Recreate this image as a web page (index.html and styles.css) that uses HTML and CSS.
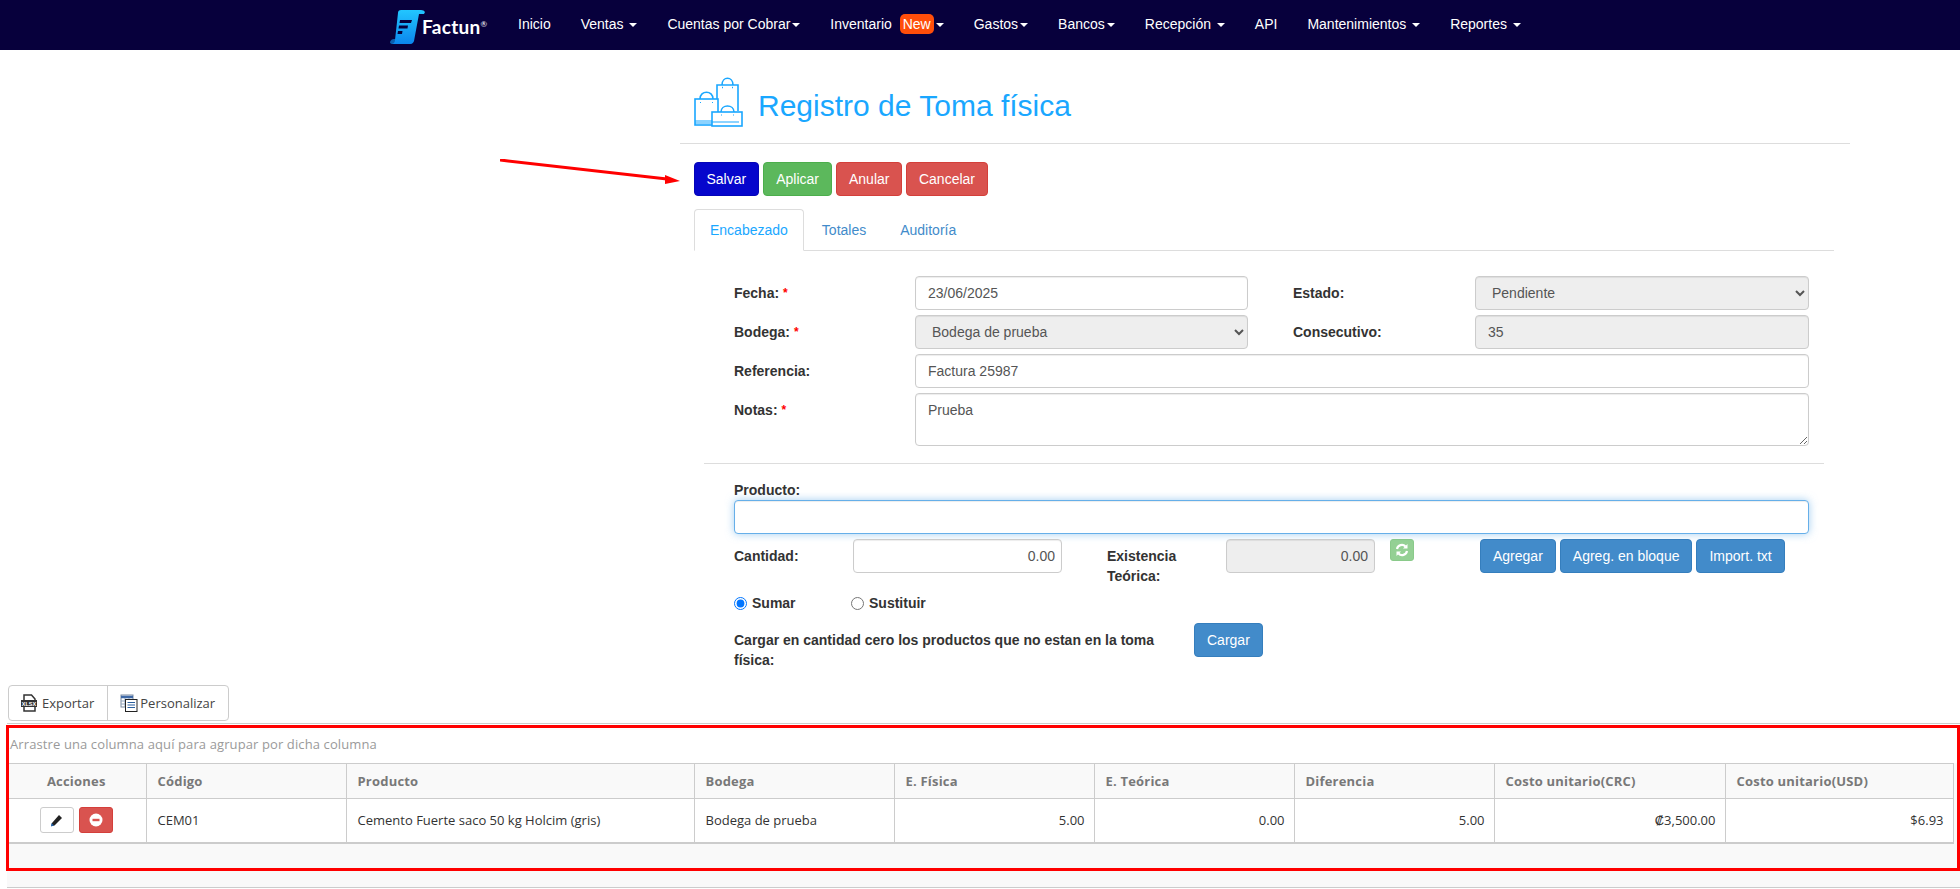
FILE: index.html
```html
<!DOCTYPE html>
<html lang="es">
<head>
    <meta charset="UTF-8">
    <meta name="viewport" content="width=device-width, initial-scale=1.0">
    <title>Registro de Toma física</title>
    <link rel="stylesheet" href="styles.css">
</head>
<body>
    <nav class="navbar">
        <a class="brand" href="#">
            <svg class="brand-icon" width="36" height="36" viewBox="0 0 36 36">
                <defs>
                    <linearGradient id="scroll" x1="0" y1="0" x2="0" y2="1">
                        <stop offset="0" stop-color="#22c6ff"/>
                        <stop offset="1" stop-color="#0b86ee"/>
                    </linearGradient>
                </defs>
                <path d="M0 33q1-3 4-3h20l-1 3q-1 2-3 2H3q-3 0-3-2z" fill="#0a5fb0"/>
                <path d="M8 4q0-3 3-3h20q3 0 4 2l-1 2h-5l-5 27q-1 3-4 3H2q3-1 3-4z" fill="url(#scroll)"/>
                <path d="M10 11h12l-1 3H9.500zM9 16.500h9l-.5 3H8.500zM8 22h4.500l-.5 3H7.500z" fill="#07003c"/>
            </svg>
            <span class="brand-text">Factun<sup>®</sup></span>
        </a>
        <ul class="nav-list">
            <li><a href="#">Inicio</a></li>
            <li><a href="#">Ventas <b class="caret"></b></a></li>
            <li><a href="#">Cuentas por Cobrar<b class="caret"></b></a></li>
            <li><a href="#">Inventario <span class="badge-new">New</span><b class="caret"></b></a></li>
            <li><a href="#">Gastos<b class="caret"></b></a></li>
            <li><a href="#">Bancos<b class="caret"></b></a></li>
            <li><a href="#">Recepción <b class="caret"></b></a></li>
            <li><a href="#">API</a></li>
            <li><a href="#">Mantenimientos <b class="caret"></b></a></li>
            <li><a href="#">Reportes <b class="caret"></b></a></li>
        </ul>
    </nav>

    <div class="page">
        <header class="page-header">
            <svg class="page-icon" width="50" height="50" viewBox="9 7 50 50" fill="none" stroke="#1aa7ff" stroke-width="1.600">
                <path d="M32 29V15h21v26"/>
                <path d="M37 15c0-9 11-9 11 0"/>
                <path d="M37 17.500h1M47 17.500h1" stroke-width="1.500"/>
                <rect x="10" y="29" width="23" height="26"/>
                <path d="M15 29c0-9 13-9 13 0"/>
                <path d="M15 32.500h1M27 32.500h1M10 51h17M10 53h17" stroke-width="1.200"/>
                <rect x="27" y="42" width="30" height="14" fill="#fff"/>
                <path d="M36 42c0-8 13-8 13 0"/>
                <path d="M36 45h1M48 45h1M27 52h27" stroke-width="1.200"/>
            </svg>
            <h1>Registro de Toma física</h1>
        </header>

        <div class="actions">
            <button class="btn btn-tight btn-save">Salvar</button>
            <button class="btn btn-wide btn-success">Aplicar</button>
            <button class="btn btn-tight btn-danger">Anular</button>
            <button class="btn btn-danger">Cancelar</button>
        </div>

        <ul class="tabs">
            <li class="active"><a href="#">Encabezado</a></li>
            <li><a href="#">Totales</a></li>
            <li><a href="#">Auditoría</a></li>
        </ul>

        <form class="form-head">
            <label>Fecha: <span class="req">*</span></label>
            <input class="field" type="text" value="23/06/2025">
            <label class="label-right">Estado:</label>
            <select class="field" disabled><option>Pendiente</option></select>

            <label>Bodega: <span class="req">*</span></label>
            <select class="field" disabled><option>Bodega de prueba</option></select>
            <label class="label-right">Consecutivo:</label>
            <input class="field" type="text" value="35" disabled>

            <label>Referencia:</label>
            <input class="field span-3" type="text" value="Factura 25987">

            <label>Notas: <span class="req">*</span></label>
            <textarea class="field span-3 notes">Prueba</textarea>
        </form>

        <hr class="divider">

        <form class="form-lines">
            <label class="label-top">Producto:</label>
            <input class="field field-focus" type="text">

            <div class="qty-row">
                <label class="qty-label">Cantidad:</label>
                <input class="field num qty-input" type="text" value="0.00">
                <label class="qty-label exist-label">Existencia Teórica:</label>
                <input class="field num exist-input" type="text" value="0.00" disabled>
                <button class="btn-refresh" type="button" aria-label="Actualizar">
                    <svg width="14" height="14" viewBox="0 0 14 14" fill="none" stroke="#fff" stroke-width="2.200">
                        <path d="M2 6a5 5 0 0 1 8.500-2.500"/>
                        <path d="M12 8a5 5 0 0 1-8.500 2.500"/>
                        <path d="M12.500 1v4.500H8z" fill="#fff" stroke="none"/>
                        <path d="M1.500 13V8.500H6z" fill="#fff" stroke="none"/>
                    </svg>
                </button>
                <div class="add-buttons">
                    <button class="btn btn-primary" type="button">Agregar</button>
                    <button class="btn btn-primary" type="button">Agreg. en bloque</button>
                    <button class="btn btn-primary" type="button">Import. txt</button>
                </div>
            </div>

            <div class="radio-row">
                <label class="radio radio-sum"><input type="radio" name="modo" checked> Sumar</label>
                <label class="radio"><input type="radio" name="modo"> Sustituir</label>
            </div>

            <div class="load-row">
                <label class="load-label">Cargar en cantidad cero los productos que no estan en la toma física:</label>
                <button class="btn btn-primary" type="button">Cargar</button>
            </div>
        </form>
    </div>

    <div class="grid-toolbar">
        <a href="#">
            <svg width="16" height="18" viewBox="0 0 16 18">
                <path d="M3 1h7.500l3.500 4v12H3z" fill="#fff" stroke="#333" stroke-width="1.500"/>
                <rect x="0" y="6" width="16" height="7" fill="#333"/>
                <text x="8" y="11.600" class="xlsx">XLSX</text>
            </svg>
            Exportar
        </a>
        <a href="#">
            <svg width="18" height="18" viewBox="0 0 18 18">
                <rect x="1" y="1" width="12" height="12" fill="#fff" stroke="#7a8aa0"/>
                <path d="M1 3h12" stroke="#3f6aa8" stroke-width="2.500"/>
                <path d="M1 7h12M1 10h12M5 4v9M9 4v9" stroke="#8fa3bd"/>
                <rect x="5.500" y="5.500" width="11.500" height="12" fill="#fff" stroke="#222"/>
                <path d="M7.500 8.500h7.500M7.500 11h7.500M7.500 13.500h7.500" stroke="#2a5f9e" stroke-width="1.200"/>
            </svg>
            Personalizar
        </a>
    </div>

    <section class="grid">
        <div class="group-panel">Arrastre una columna aquí para agrupar por dicha columna</div>
        <table class="grid-table">
            <colgroup>
                <col class="c-actions"><col class="c-code"><col class="c-product"><col class="c-std"><col class="c-std">
                <col class="c-std"><col class="c-std"><col class="c-crc"><col class="c-usd">
            </colgroup>
            <thead>
                <tr>
                    <th class="center">Acciones</th>
                    <th>Código</th>
                    <th>Producto</th>
                    <th>Bodega</th>
                    <th>E. Física</th>
                    <th>E. Teórica</th>
                    <th>Diferencia</th>
                    <th>Costo unitario(CRC)</th>
                    <th>Costo unitario(USD)</th>
                </tr>
            </thead>
            <tbody>
                <tr>
                    <td class="center">
                        <button class="row-btn row-edit" aria-label="Editar">
                            <svg width="13" height="13" viewBox="0 0 13 13">
                                <path d="M9 1l3 3-7.500 7.500-3 .5.5-3z" fill="#222"/>
                                <path d="M1.500 9l2.500 2.500L1 12.500z" fill="#1d5fa8"/>
                            </svg>
                        </button>
                        <button class="row-btn row-delete" aria-label="Eliminar">
                            <svg width="14" height="14" viewBox="0 0 14 14">
                                <circle cx="7" cy="7" r="6.500" fill="#fff"/>
                                <rect x="3.500" y="5.800" width="7" height="2.400" fill="#d9534f"/>
                            </svg>
                        </button>
                    </td>
                    <td>CEM01</td>
                    <td>Cemento Fuerte saco 50 kg Holcim (gris)</td>
                    <td>Bodega de prueba</td>
                    <td class="num">5.00</td>
                    <td class="num">0.00</td>
                    <td class="num">5.00</td>
                    <td class="num">₡3,500.00</td>
                    <td class="num">$6.93</td>
                </tr>
            </tbody>
        </table>
        <div class="grid-footer"></div>
    </section>

    <!-- anotaciones rojas de la captura -->
    <svg class="mark-arrow" width="190" height="30" viewBox="0 0 190 30">
        <path d="M0 1L167 20" stroke="#ff0000" stroke-width="3"/>
        <path d="M165 16L180 22L165 25z" fill="#ff0000"/>
    </svg>
    <div class="mark-box"></div>
</body>
</html>
```

FILE: styles.css
```css
* {
    box-sizing: border-box;
}
body {
    margin: 0;
    background: #fff;
    color: #333;
    font-family: "Liberation Sans", Arial, sans-serif;
    font-size: 14px;
    line-height: 20px;
    position: relative;
    height: 889px;
    overflow: hidden;
}
a {
    text-decoration: none;
}

/* barra superior */
.navbar {
    display: flex;
    height: 50px;
    padding-left: 390px;
    background: #07003c;
}
.brand {
    display: flex;
    align-items: center;
    width: 113px;
    height: 50px;
    flex: none;
}
.brand-icon {
    flex: none;
    margin-top: 3px;
    margin-right: -4px;
}
.brand-text {
    color: #fff;
    font-family: Lato, sans-serif;
    font-weight: 700;
    font-size: 19px;
    letter-spacing: .3px;
    margin-top: 4px;
}
.brand-text sup {
    font-size: 8px;
    font-weight: 400;
    line-height: 0;
    vertical-align: 7px;
}
.nav-list {
    display: flex;
    margin: 0;
    padding: 0;
    list-style: none;
}
.nav-list a {
    display: block;
    padding: 14px 15px 16px;
    color: #fff;
    white-space: nowrap;
}
.caret {
    display: inline-block;
    width: 0;
    height: 0;
    margin-left: 2px;
    vertical-align: middle;
    border-top: 4px solid #fff;
    border-left: 4px solid transparent;
    border-right: 4px solid transparent;
}
.badge-new {
    display: inline-block;
    margin-left: 4px;
    padding: 0 3px;
    height: 20px;
    background: #ff4e0a;
    border-radius: 5px;
}

/* contenido */
.page {
    width: 1170px;
    margin-left: 680px;
}
.page-header {
    display: flex;
    align-items: center;
    height: 94px;
    padding-left: 14px;
    padding-top: 11px;
    border-bottom: 1px solid #ddd;
}
.page-header h1 {
    margin: 6px 0 0 14px;
    color: #1aa7ff;
    font-size: 30px;
    font-weight: 400;
    line-height: 33px;
}
.actions {
    display: flex;
    gap: 4px;
    padding: 18px 0 0 14px;
}
.btn {
    height: 34px;
    padding: 6px 12px;
    border: 1px solid transparent;
    border-radius: 4px;
    color: #fff;
    font-family: inherit;
    font-size: 14px;
    line-height: 20px;
    white-space: nowrap;
}
.btn-tight {
    padding: 6px 11.5px;
}
.btn-wide {
    padding: 6px 12.5px;
}
.btn-save {
    background: #0606cc;
    border-color: #0505b8;
}
.btn-success {
    background: #5cb85c;
    border-color: #4cae4c;
}
.btn-danger {
    background: #d9534f;
    border-color: #d43f3a;
}
.btn-primary {
    background: #428bca;
    border-color: #357ebd;
}
.tabs {
    display: flex;
    width: 1140px;
    height: 42px;
    margin: 13px 0 0 14px;
    padding: 0;
    list-style: none;
    border-bottom: 1px solid #ddd;
}
.tabs li {
    margin-right: 2px;
    height: 42px;
}
.tabs a {
    display: block;
    height: 42px;
    padding: 10px 15px;
    border: 1px solid transparent;
    border-radius: 4px 4px 0 0;
    color: #428bca;
}
.tabs .active a {
    color: #1aa7ff;
    background: #fff;
    border-color: #ddd #ddd #fff;
}
.form-head {
    display: grid;
    grid-template-columns: 181px 333px 45px 182px 334px;
    grid-template-rows: 34px 34px 34px 53px;
    row-gap: 5px;
    margin: 25px 0 0 54px;
    width: 1075px;
}
.form-head label,
.label-top,
.qty-label,
.radio,
.load-label {
    font-weight: 700;
}
.form-head label {
    padding-top: 7px;
}
.label-right {
    grid-column: 4;
}
.req {
    color: #f00;
    font-size: 12px;
    vertical-align: 1px;
}
.field {
    display: block;
    width: 100%;
    height: 34px;
    padding: 6px 12px;
    border: 1px solid #ccc;
    border-radius: 4px;
    background: #fff;
    color: #555;
    font-family: inherit;
    font-size: 14px;
    line-height: 20px;
    box-shadow: inset 0 1px 1px rgba(0, 0, 0, .075);
}
.field:disabled {
    background: #eee;
    opacity: 1;
}
.field.num {
    padding-right: 6px;
}
.span-3 {
    grid-column: 2 / span 4;
}
.notes {
    height: 53px;
    resize: vertical;
}
.divider {
    width: 1120px;
    margin: 17px 0 0 24px;
    border: 0;
    border-top: 1px solid #ddd;
}
.form-lines {
    width: 1075px;
    margin: 16px 0 0 54px;
}
.label-top {
    display: block;
    height: 20px;
}
.field-focus {
    border-color: #66afe9;
    box-shadow: inset 0 1px 1px rgba(0, 0, 0, .075), 0 0 8px rgba(102, 175, 233, .6);
}
.qty-row {
    display: flex;
    align-items: flex-start;
    height: 54px;
    margin-top: 5px;
}
.qty-label {
    flex: none;
    width: 119px;
    padding-top: 7px;
}
.exist-label {
    margin-left: 45px;
}
.num {
    text-align: right;
}
.qty-input {
    width: 209px;
}
.exist-input {
    width: 149px;
}
.btn-refresh {
    width: 24px;
    height: 22px;
    margin-left: 15px;
    padding: 0;
    border: 1px solid #4cae4c;
    border-radius: 3px;
    background: #5cb85c;
    opacity: .65;
    display: flex;
    align-items: center;
    justify-content: center;
}
.add-buttons {
    display: flex;
    gap: 4px;
    margin-left: 66px;
}
.radio-row {
    display: flex;
    height: 20px;
}
.radio {
    display: flex;
    align-items: center;
    gap: 5px;
}
.radio input {
    width: 13px;
    height: 13px;
    margin: 0;
}
.radio-sum {
    width: 117px;
}
.load-row {
    display: flex;
    align-items: flex-start;
    margin-top: 10px;
}
.load-label {
    width: 460px;
    padding-top: 7px;
}

/* grilla */
.grid-toolbar {
    position: absolute;
    top: 685px;
    left: 8px;
    display: flex;
    height: 36px;
    border: 1px solid #ccc;
    border-radius: 4px;
    font-family: "Open Sans", sans-serif;
    font-size: 13px;
}
.grid-toolbar a {
    display: flex;
    align-items: center;
    gap: 5px;
    padding: 0 13px 0 12px;
    color: #444;
}
.grid-toolbar a + a {
    gap: 2px;
    border-left: 1px solid #ccc;
    padding: 0 13px 0 12px;
}
.xlsx {
    fill: #fff;
    font-family: "Liberation Sans", sans-serif;
    font-size: 5.500px;
    font-weight: 700;
    text-anchor: middle;
}
.grid {
    position: absolute;
    top: 723px;
    left: 7px;
    right: 0;
    height: 165px;
    border-top: 1px solid #ccc;
    border-bottom: 1px solid #ccc;
    font-family: "Open Sans", sans-serif;
    font-size: 13px;
    background: #f9f9f9;
}
.group-panel {
    height: 39px;
    padding: 10px 3px 0;
    background: #fff;
    color: #9a9a9a;
    letter-spacing: .11px;
}
.grid-table {
    width: 1946px;
    table-layout: fixed;
    border-collapse: collapse;
    background: #fff;
}
.c-actions { width: 139px; }
.c-code { width: 200px; }
.c-product { width: 348px; }
.c-std { width: 200px; }
.c-crc { width: 231px; }
.c-usd { width: 228px; }
.grid-table th,
.grid-table td {
    padding: 0 9px 0 11px;
    border: 1px solid #ccc;
    text-align: left;
    color: #333;
    font-weight: 400;
}
.grid-table th {
    height: 35px;
    background: #f9f9f9;
    color: #787878;
    font-weight: 700;
    letter-spacing: .2px;
}
.grid-table td {
    height: 44px;
    border-bottom-width: 2px;
}
.grid-table .center {
    padding: 0 10px;
    text-align: center;
    border-left: 0;
}
.grid-table .num {
    text-align: right;
}
.row-btn {
    display: inline-flex;
    align-items: center;
    justify-content: center;
    width: 34px;
    height: 26px;
    padding: 0;
    border-radius: 3px;
    vertical-align: middle;
    border: 1px solid #ccc;
    background: #fff;
}
.row-delete {
    margin-left: 2px;
    background: #d9534f;
    border-color: #d43f3a;
}

/* anotaciones sobre la captura */
.mark-arrow {
    position: absolute;
    left: 500px;
    top: 159px;
}
.mark-box {
    position: absolute;
    left: 6px;
    top: 725px;
    width: 1954px;
    height: 146px;
    border: 3px solid #f00;
}
```
